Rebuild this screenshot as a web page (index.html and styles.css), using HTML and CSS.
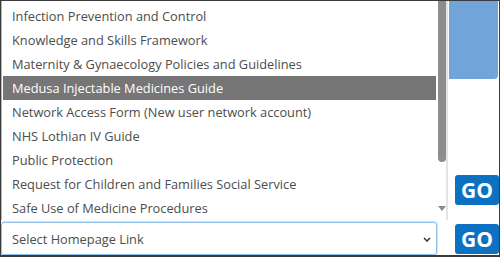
FILE: index.html
```html
<!DOCTYPE html>
<html lang="en">
<head>
    <meta charset="UTF-8">
    <title>Homepage Links</title>
    <link rel="stylesheet" href="styles.css">
</head>
<body>
    <div class="frame">
        <div class="left">
            <div class="listbox">
                <ul class="options">
                    <li>Infection Prevention and Control</li>
                    <li>Knowledge and Skills Framework</li>
                    <li>Maternity &amp; Gynaecology Policies and Guidelines</li>
                    <li class="selected">Medusa Injectable Medicines Guide</li>
                    <li>Network Access Form (New user network account)</li>
                    <li>NHS Lothian IV Guide</li>
                    <li>Public Protection</li>
                    <li>Request for Children and Families Social Service</li>
                    <li>Safe Use of Medicine Procedures</li>
                </ul>
                <div class="scrollbar">
                    <div class="thumb"></div>
                    <div class="arrow"></div>
                </div>
            </div>
            <div class="select">
                <span>Select Homepage Link</span>
                <svg class="chevron" width="8" height="5" viewBox="0 0 8 5">
                    <path d="M1 1 L4 4 L7 1" fill="none" stroke="#333" stroke-width="1.5"/>
                </svg>
            </div>
        </div>
        <div class="right">
            <div class="panel"></div>
            <button class="go first">GO</button>
            <button class="go">GO</button>
        </div>
    </div>
</body>
</html>
```

FILE: styles.css
```css
body {
    margin: 0;
    padding: 0;
    background: #fff;
    font-family: 'Open Sans', sans-serif;
}

.frame {
    width: 500px;
    height: 257px;
    box-sizing: border-box;
    border: 1px solid #3a3a3a;
    border-bottom-width: 2px;
    display: flex;
    overflow: hidden;
}

.left {
    width: 447px;
    display: flex;
    flex-direction: column;
}

.listbox {
    height: 219px;
    flex-shrink: 0;
    box-sizing: border-box;
    border-right: 2px solid #e4e4e4;
    border-left: 1px solid #b8b8b8;
    display: flex;
}

.options {
    list-style: none;
    margin: 0;
    padding: 3px 0 0 1px;
    width: 433px;
}

.options li {
    height: 24px;
    line-height: 24px;
    padding-left: 9px;
    font-size: 12.8px;
    color: #4d4d4d;
    white-space: nowrap;
}

.options li.selected {
    background: #767676;
    color: #fff;
}

.scrollbar {
    margin-left: 2px;
    width: 8px;
    display: flex;
    flex-direction: column;
    align-items: center;
}

.thumb {
    width: 8px;
    height: 161px;
    background: #8d8d8d;
    border-radius: 0 0 4px 4px;
}

.arrow {
    margin-top: 44px;
    width: 0;
    height: 0;
    border-left: 4px solid transparent;
    border-right: 4px solid transparent;
    border-top: 5px solid #8a8a8a;
}

.select {
    margin-top: 2px;
    width: 436px;
    height: 33px;
    flex-shrink: 0;
    box-sizing: border-box;
    border: 1px solid #8fc0ea;
    border-radius: 3px;
    box-shadow: 0 0 0 1px #d2e6f7;
    display: flex;
    align-items: center;
    justify-content: space-between;
    padding: 0 5px 0 10px;
    font-size: 12.8px;
    color: #4d4d4d;
}

.chevron {
    margin-top: 1px;
}

.right {
    flex: 1;
    display: flex;
    flex-direction: column;
    align-items: flex-end;
}

.panel {
    align-self: stretch;
    margin-left: 1px;
    margin-right: 1px;
    height: 78px;
    background: #71a5da;
    border-radius: 0 0 4px 0;
}

.go {
    width: 44px;
    height: 30px;
    margin: 0;
    padding: 0;
    border: none;
    border-radius: 3px;
    background: #0c71c3;
    color: #fff;
    font-family: 'Open Sans', sans-serif;
    font-weight: bold;
    font-size: 21px;
    line-height: 30px;
}

.go.first {
    margin-top: 96px;
    margin-bottom: 19px;
}
```
